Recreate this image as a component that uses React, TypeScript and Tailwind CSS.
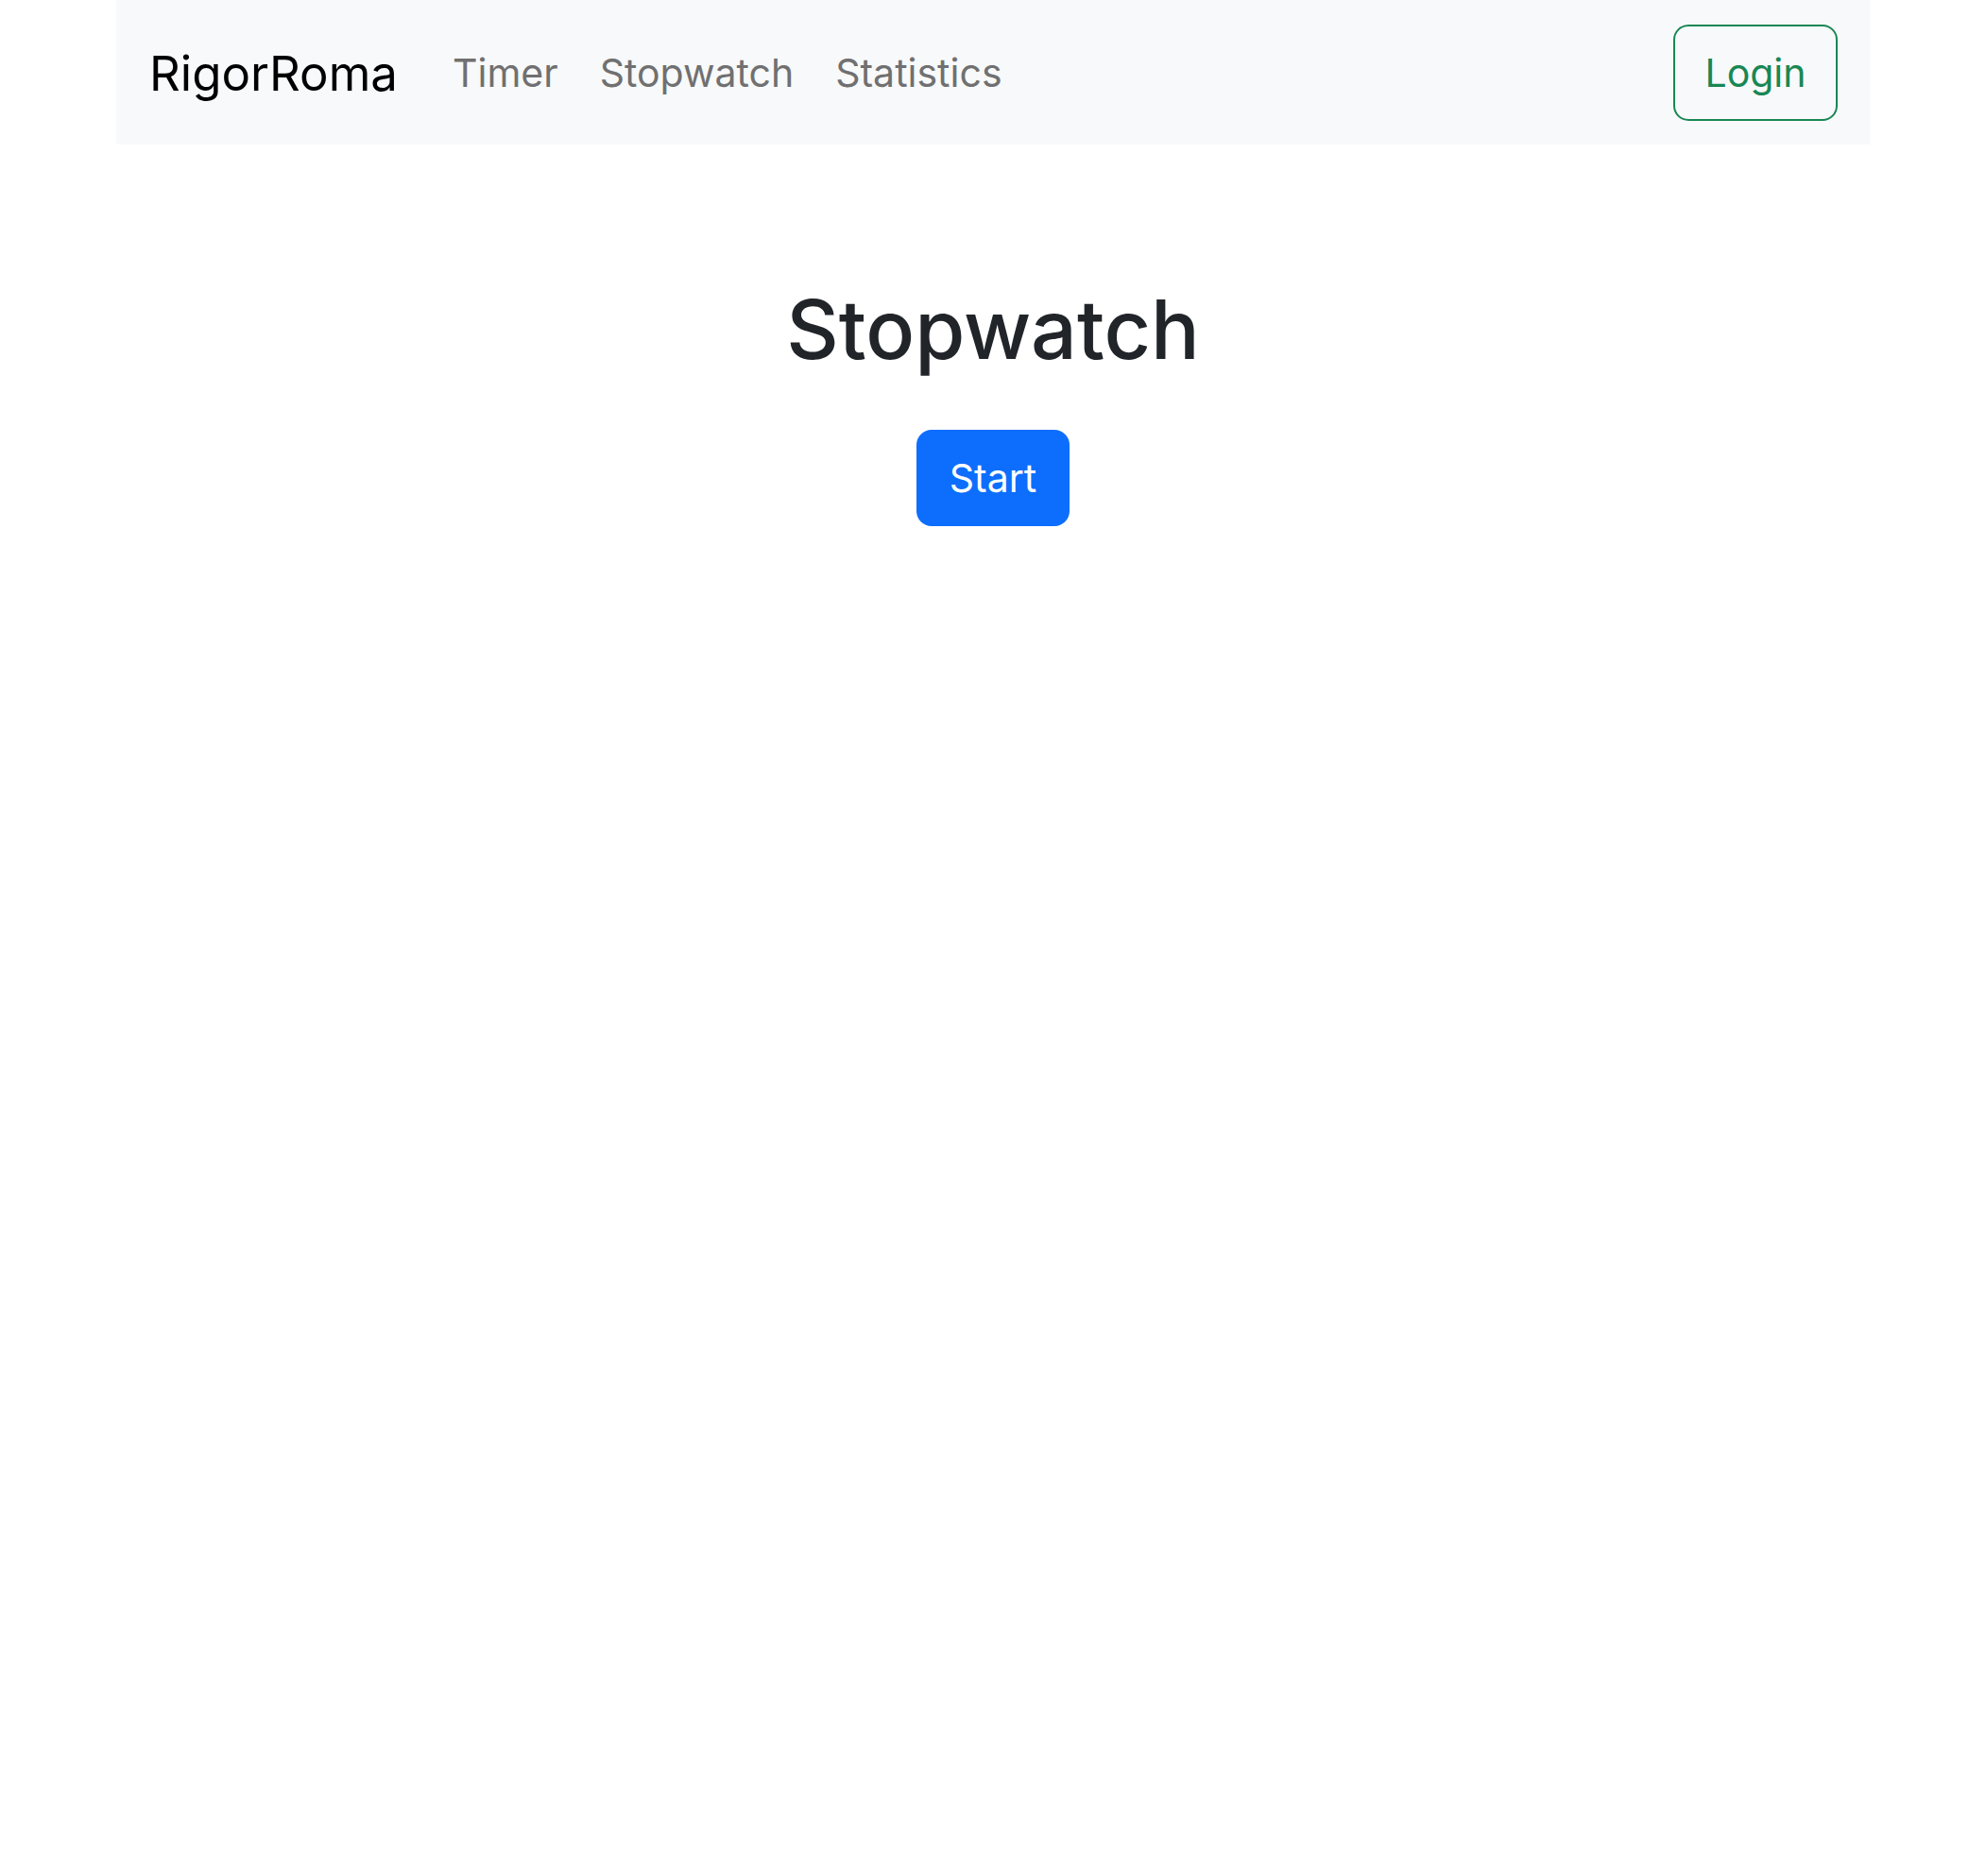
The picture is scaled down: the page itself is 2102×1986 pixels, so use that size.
export default function App() {
  const links = ['Timer', 'Stopwatch', 'Statistics'];

  return (
    <div className="min-h-screen bg-white font-['Inter',sans-serif]">
      <nav className="mx-auto flex h-[153px] w-[1856px] items-center bg-[#f8f9fa] pl-[35px] pr-[34px]">
        <a href="#" className="pt-[2px] text-[51px] leading-none text-black">
          RigorRoma
        </a>
        <ul className="ml-[58px] flex items-center gap-[44px] pt-[2px]">
          {links.map((link) => (
            <li key={link}>
              <a href="#" className="text-[41px] leading-none text-[#707071]">
                {link}
              </a>
            </li>
          ))}
        </ul>
        <button className="ml-auto flex h-[102px] w-[174px] items-center justify-center rounded-[16px] border-2 border-[#198754] pt-[2px] text-[41px] text-[#198754]">
          Login
        </button>
      </nav>

      <main className="flex flex-col items-center">
        <h1 className="mt-[145px] text-[86px] font-medium leading-[1.2] text-[#212529]">
          Stopwatch
        </h1>
        <button className="mt-[54px] flex h-[102px] w-[162px] items-center justify-center rounded-[16px] bg-[#0d6efd] pt-[2px] text-[41px] text-white">
          Start
        </button>
      </main>
    </div>
  );
}
